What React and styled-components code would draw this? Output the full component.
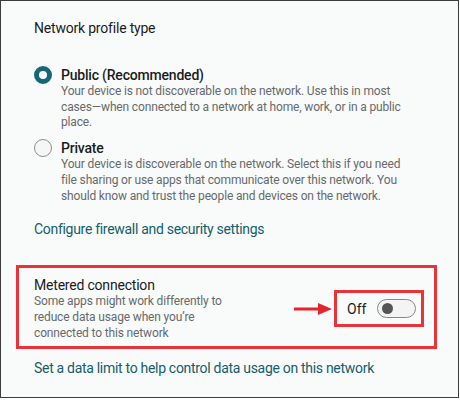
import React from 'react'
import styled, { createGlobalStyle } from 'styled-components'

const GlobalStyle = createGlobalStyle`
  html, body {
    margin: 0;
    padding: 0;
    background: #ffffff;
  }
  body {
    font-family: "Segoe UI", Roboto, "Noto Sans", sans-serif;
  }
`

const Frame = styled.div`
  width: 459px;
  height: 398px;
  box-sizing: border-box;
  border: 1px solid #3c3c3c;
  background: #f9fbfb;
  padding: 17px 21px 0 15px;
  color: #1b1b1b;
`

const Section = styled.div`
  padding-left: 18px;
`

const Heading = styled.div`
  font-size: 14px;
  line-height: 20px;
  letter-spacing: -0.2px;
  margin-bottom: 28px;
`

const Options = styled.div`
  display: flex;
  flex-direction: column;
  gap: 8px;
`

const Option = styled.div`
  display: flex;
  align-items: flex-start;
  gap: 9px;
`

const Radio = styled.span`
  width: 18px;
  height: 18px;
  box-sizing: border-box;
  border-radius: 50%;
  flex: none;
  border: ${p => (p.$checked ? '5px solid #176877' : '1px solid #8c8c8c')};
  background: ${p => (p.$checked ? '#ffffff' : '#f6f6f6')};
`

const OptionText = styled.div`
  display: flex;
  flex-direction: column;
  max-width: 347px;
`

const Label = styled.div`
  font-size: 14px;
  line-height: 18px;
  font-weight: 500;
  letter-spacing: -0.2px;
`

const Desc = styled.div`
  font-size: 12px;
  line-height: 15.7px;
  letter-spacing: -0.15px;
  color: #666a6c;
`

const Link = styled.div`
  font-size: 14px;
  line-height: 20px;
  letter-spacing: -0.3px;
  color: #135d6b;
  margin-top: ${p => p.$top}px;
`

const Highlight = styled.div`
  margin-top: 26px;
  border: 3px solid #ea3339;
  padding: 8px 10px 5px 15px;
  display: flex;
  align-items: center;
  justify-content: space-between;
`

const MeteredText = styled.div`
  width: 200px;
`

const Title = styled.div`
  font-size: 14px;
  line-height: 18px;
  letter-spacing: -0.2px;
`

const Control = styled.div`
  display: flex;
  align-items: center;
  gap: 2px;
`

const ToggleBox = styled.div`
  display: flex;
  align-items: center;
  justify-content: space-between;
  box-sizing: border-box;
  width: 90px;
  height: 37px;
  border: 3px solid #ea3339;
  padding: 0 5px 0 10px;
`

const State = styled.span`
  font-size: 14px;
  line-height: 20px;
`

const Track = styled.span`
  width: 39px;
  height: 19px;
  box-sizing: border-box;
  border: 1px solid #878787;
  border-radius: 10px;
  background: #f4f4f4;
  display: flex;
  align-items: center;
  padding-left: 4px;
`

const Knob = styled.span`
  width: 11px;
  height: 11px;
  border-radius: 50%;
  background: #555555;
`

function Arrow() {
  return (
    <svg width="38" height="14" viewBox="0 0 38 14">
      <line x1="0" y1="7" x2="26" y2="7" stroke="#e3262d" strokeWidth="3" />
      <polygon points="24,1 38,7 24,13" fill="#e3262d" />
    </svg>
  )
}

const options = [
  {
    label: 'Public (Recommended)',
    checked: true,
    desc: 'Your device is not discoverable on the network. Use this in most cases\u2014when connected to a network at home, work, or in a public place.'
  },
  {
    label: 'Private',
    checked: false,
    desc: 'Your device is discoverable on the network. Select this if you need file sharing or use apps that communicate over this network. You should know and trust the people and devices on the network.'
  }
]

export default function App() {
  return (
    <>
      <GlobalStyle />
      <Frame>
        <Section>
          <Heading>Network profile type</Heading>
          <Options>
            {options.map(o => (
              <Option key={o.label}>
                <Radio $checked={o.checked} />
                <OptionText>
                  <Label>{o.label}</Label>
                  <Desc>{o.desc}</Desc>
                </OptionText>
              </Option>
            ))}
          </Options>
          <Link $top={15}>Configure firewall and security settings</Link>
        </Section>
        <Highlight>
          <MeteredText>
            <Title>Metered connection</Title>
            <Desc>Some apps might work differently to reduce data usage when you’re connected to this network</Desc>
          </MeteredText>
          <Control>
            <Arrow />
            <ToggleBox>
              <State>Off</State>
              <Track>
                <Knob />
              </Track>
            </ToggleBox>
          </Control>
        </Highlight>
        <Section>
          <Link $top={9}>Set a data limit to help control data usage on this network</Link>
        </Section>
      </Frame>
    </>
  )
}
